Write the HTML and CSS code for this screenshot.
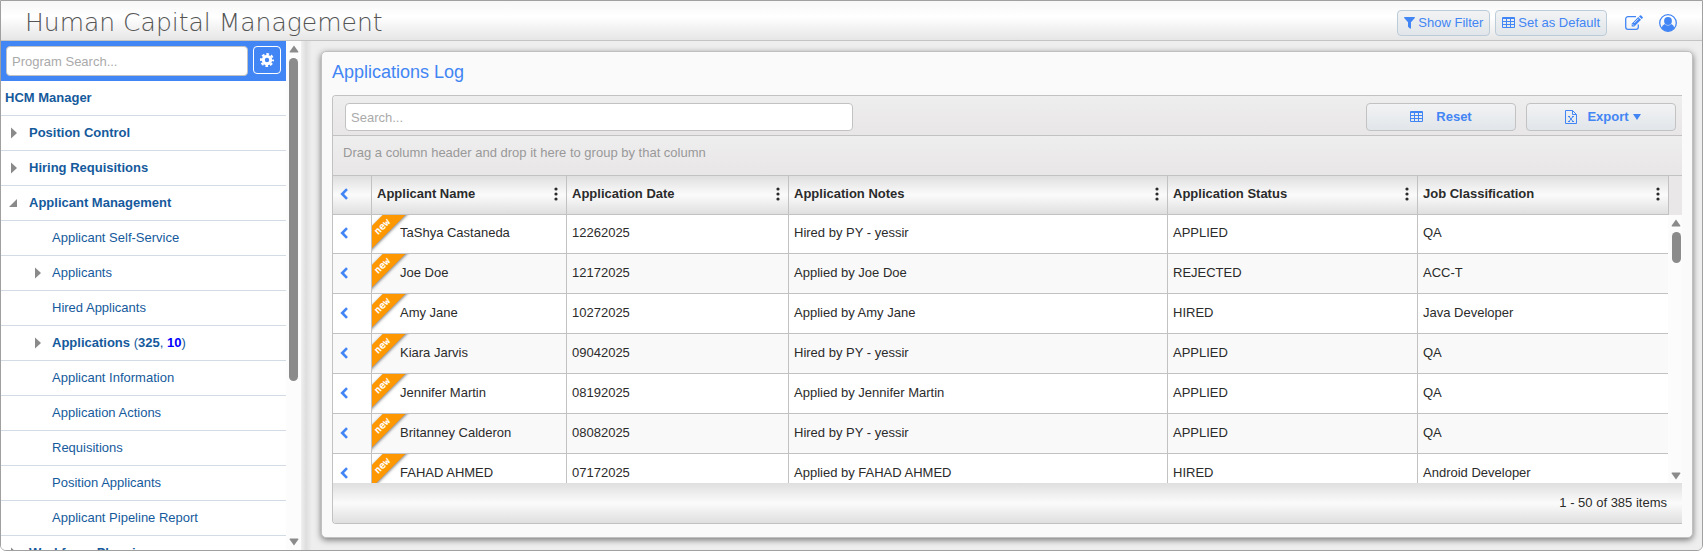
FILE: index.html
```html
<!DOCTYPE html>
<html lang="en">
<head>
<meta charset="utf-8">
<title>Human Capital Management</title>
<link rel="stylesheet" href="styles.css">
</head>
<body>
<svg class="defs" aria-hidden="true">
  <symbol id="i-table" viewBox="0 0 13 12"><path fill="currentColor" fill-rule="evenodd" d="M1 0h11a1 1 0 0 1 1 1v9a1 1 0 0 1-1 1H1a1 1 0 0 1-1-1V1a1 1 0 0 1 1-1zM1 2v2h3V2zM5 2v2h3V2zM9 2v2h3V2zM1 5v2h3V5zM5 5v2h3V5zM9 5v2h3V5zM1 8v2h3V8zM5 8v2h3V8zM9 8v2h3V8z"/></symbol>
  <symbol id="i-chevron" viewBox="0 0 8 12"><path d="M7 1.2 2.2 6 7 10.8" fill="none" stroke="currentColor" stroke-width="2.6"/></symbol>
  <symbol id="i-dots" viewBox="0 0 4 14"><circle cx="2" cy="2" r="1.6"/><circle cx="2" cy="7" r="1.6"/><circle cx="2" cy="12" r="1.6"/></symbol>
  <symbol id="i-right" viewBox="0 0 6 12"><path d="M0 0.5 6 6 0 11.5z"/></symbol>
  <symbol id="i-open" viewBox="0 0 8 8"><path d="M8 0v8H0z"/></symbol>
  <symbol id="i-up" viewBox="0 0 10 8"><path d="M5 0.5 9.3 6.5q.4 1-.6 1H1.3q-1 0-.6-1z"/></symbol>
  <symbol id="i-down" viewBox="0 0 10 8"><path d="M5 7.5.7 1.5q-.4-1 .6-1h7.4q1 0 .6 1z"/></symbol>
</svg>
<div class="app">
  <header class="topbar">
    <h1 class="brand">Human Capital Management</h1>
    <div class="actions">
      <button class="btn" type="button"><svg width="11" height="12" viewBox="0 0 11 12"><path fill="currentColor" d="M.6 0h9.8q.8.3.4 1L7 5.2V11q-.2 1-1 .5L4.200 10q-.2-.2-.2-.5V5.200L.2 1Q-.2.3.6 0z"/></svg>Show Filter</button>
      <button class="btn" type="button"><svg width="13" height="12"><use href="#i-table"/></svg>Set as Default</button>
      <button class="icon-btn edit" type="button" aria-label="Edit"><svg width="18" height="16" viewBox="0 0 18 16"><path fill="none" stroke="currentColor" stroke-width="1.300" d="M11 1.700H3A2.300 2.300 0 0 0 .7 4v8A2.300 2.300 0 0 0 3 14.300h8A2.300 2.300 0 0 0 13.300 12V9.500"/><path fill="currentColor" d="m13.300 2.100 2.700 2.700-6.600 6.600H6.700V8.700zM14 1.400l.9-.9q.7-.6 1.300 0l1.400 1.400q.6.600 0 1.300l-.9.9z"/><path stroke="#fff" stroke-width=".8" d="m9.200 8 4.300-4.300M7.500 9.200l1.400 1.400"/></svg></button>
      <button class="icon-btn" type="button" aria-label="Account"><svg width="18" height="18" viewBox="0 0 18 18"><circle cx="9" cy="9" r="8.300" fill="none" stroke="currentColor" stroke-width="1.300"/><circle cx="9" cy="7" r="3.900" fill="currentColor"/><path fill="currentColor" d="M2.600 14q.5-3.300 3.200-4.100Q9 13 12.200 9.900q2.700.8 3.200 4.100Q13 17.200 9 17.200T2.600 14z"/></svg></button>
    </div>
  </header>
  <div class="workspace">
    <aside class="sidebar">
      <div class="nav-pane">
        <div class="nav-search">
          <input type="text" placeholder="Program Search..." aria-label="Program Search">
          <button type="button" aria-label="Settings"><svg width="14" height="14" viewBox="0 0 14 14"><g fill="none" stroke="#fff"><circle cx="7" cy="7" r="3.700" stroke-width="3"/><circle cx="7" cy="7" r="6" stroke-width="2" stroke-dasharray="2.712 2" stroke-dashoffset="1.356"/></g></svg></button>
        </div>
        <ul class="nav">
          <li class="root"><a href="#">HCM Manager</a></li>
          <li class="group"><svg class="tri" width="6" height="12"><use href="#i-right"/></svg><a href="#">Position Control</a></li>
          <li class="group"><svg class="tri" width="6" height="12"><use href="#i-right"/></svg><a href="#">Hiring Requisitions</a></li>
          <li class="group"><svg class="tri" width="8" height="8"><use href="#i-open"/></svg><a href="#">Applicant Management</a></li>
          <li class="leaf"><a href="#">Applicant Self-Service</a></li>
          <li class="leaf"><svg class="tri" width="6" height="12"><use href="#i-right"/></svg><a href="#">Applicants</a></li>
          <li class="leaf"><a href="#">Hired Applicants</a></li>
          <li class="leaf"><svg class="tri" width="6" height="12"><use href="#i-right"/></svg><a href="#"><b>Applications</b> (<b>325</b>, <b class="count">10</b>)</a></li>
          <li class="leaf"><a href="#">Applicant Information</a></li>
          <li class="leaf"><a href="#">Application Actions</a></li>
          <li class="leaf"><a href="#">Requisitions</a></li>
          <li class="leaf"><a href="#">Position Applicants</a></li>
          <li class="leaf"><a href="#">Applicant Pipeline Report</a></li>
          <li class="group"><svg class="tri" width="6" height="12"><use href="#i-right"/></svg><a href="#">Workforce Planning</a></li>
        </ul>
      </div>
      <div class="scroll"><svg width="10" height="8"><use href="#i-up"/></svg><div class="track"><div class="thumb nav-thumb"></div></div><svg width="10" height="8"><use href="#i-down"/></svg></div>
    </aside>
    <main class="content">
      <section class="panel">
        <h2>Applications Log</h2>
        <div class="grid">
          <div class="toolbar">
            <input type="text" placeholder="Search..." aria-label="Search">
            <div class="tools">
              <button class="btn wide" type="button"><svg width="13" height="12"><use href="#i-table"/></svg>Reset</button>
              <button class="btn wide export" type="button"><svg width="12" height="14" viewBox="0 0 12 14"><path fill="none" stroke="currentColor" d="M.5.5h7l4 4v9H.5zM7.500.5v4h4M4 6.500l4 5M8 6.500l-4 5M3 6.500h2M7 6.500h2M3 11.500h2M7 11.500h2"/></svg><span>Export <svg width="8" height="6" viewBox="0 0 8 6"><path fill="currentColor" d="M0 0h8L4 6z"/></svg></span></button>
            </div>
          </div>
          <div class="grouping">Drag a column header and drop it here to group by that column</div>
          <div class="head">
            <table>
              <colgroup><col class="c0"><col class="c1"><col class="c2"><col class="c3"><col class="c4"><col class="c5"></colgroup>
              <thead><tr>
                <th><svg class="chev" width="8" height="12"><use href="#i-chevron"/></svg></th>
                <th><div class="th">Applicant Name<svg width="4" height="14"><use href="#i-dots"/></svg></div></th>
                <th><div class="th">Application Date<svg width="4" height="14"><use href="#i-dots"/></svg></div></th>
                <th><div class="th">Application Notes<svg width="4" height="14"><use href="#i-dots"/></svg></div></th>
                <th><div class="th">Application Status<svg width="4" height="14"><use href="#i-dots"/></svg></div></th>
                <th><div class="th">Job Classification<svg width="4" height="14"><use href="#i-dots"/></svg></div></th>
              </tr></thead>
            </table>
          </div>
          <div class="rows">
            <div class="viewport">
              <table>
                <colgroup><col class="c0"><col class="c1"><col class="c2"><col class="c3"><col class="c4"><col class="c5"></colgroup>
                <tbody>
                <tr><td><svg class="chev" width="8" height="12"><use href="#i-chevron"/></svg></td><td class="name"><div class="ribbon"><span>new</span></div>TaShya Castaneda</td><td>12262025</td><td>Hired by PY - yessir</td><td>APPLIED</td><td>QA</td></tr>
                <tr><td><svg class="chev" width="8" height="12"><use href="#i-chevron"/></svg></td><td class="name"><div class="ribbon"><span>new</span></div>Joe Doe</td><td>12172025</td><td>Applied by Joe Doe</td><td>REJECTED</td><td>ACC-T</td></tr>
                <tr><td><svg class="chev" width="8" height="12"><use href="#i-chevron"/></svg></td><td class="name"><div class="ribbon"><span>new</span></div>Amy Jane</td><td>10272025</td><td>Applied by Amy Jane</td><td>HIRED</td><td>Java Developer</td></tr>
                <tr><td><svg class="chev" width="8" height="12"><use href="#i-chevron"/></svg></td><td class="name"><div class="ribbon"><span>new</span></div>Kiara Jarvis</td><td>09042025</td><td>Hired by PY - yessir</td><td>APPLIED</td><td>QA</td></tr>
                <tr><td><svg class="chev" width="8" height="12"><use href="#i-chevron"/></svg></td><td class="name"><div class="ribbon"><span>new</span></div>Jennifer Martin</td><td>08192025</td><td>Applied by Jennifer Martin</td><td>APPLIED</td><td>QA</td></tr>
                <tr><td><svg class="chev" width="8" height="12"><use href="#i-chevron"/></svg></td><td class="name"><div class="ribbon"><span>new</span></div>Britanney Calderon</td><td>08082025</td><td>Hired by PY - yessir</td><td>APPLIED</td><td>QA</td></tr>
                <tr><td><svg class="chev" width="8" height="12"><use href="#i-chevron"/></svg></td><td class="name"><div class="ribbon"><span>new</span></div>FAHAD AHMED</td><td>07172025</td><td>Applied by FAHAD AHMED</td><td>HIRED</td><td>Android Developer</td></tr>
                </tbody>
              </table>
            </div>
            <div class="scroll grid-scroll"><svg width="10" height="8"><use href="#i-up"/></svg><div class="track"><div class="thumb row-thumb"></div></div><svg width="10" height="8"><use href="#i-down"/></svg></div>
          </div>
          <footer class="pager">1 - 50 of 385 items</footer>
        </div>
      </section>
    </main>
  </div>
</div>
</body>
</html>
```
FILE: styles.css
```css
* { box-sizing: border-box; }
body { margin: 0; background: #fff; color: #2b2b2b; font: 13px/16px "Liberation Sans", Arial, sans-serif; }
button, input { font: inherit; }
button { cursor: pointer; }
svg { flex: none; display: block; }
.defs { position: absolute; width: 0; height: 0; }
.app { display: flex; flex-direction: column; height: 100vh; border: 1px solid #a0a0a0; border-radius: 0 0 6px 6px; overflow: hidden; background: #eee; }

.topbar { flex: none; display: flex; align-items: center; justify-content: space-between; height: 40px; padding: 4px 25px 0 24px; border-bottom: 1px solid #c4c4c4; background: linear-gradient(#f7f7f7, #fff 40%, #e6e6e6); }
.brand { margin: 0; color: #555; font: 200 25px/32px "DejaVu Sans Light", "DejaVu Sans", sans-serif; }
.actions { display: flex; align-items: center; gap: 5px; }
.btn { display: flex; align-items: center; justify-content: center; gap: 3px; height: 26px; padding: 0 6px; border: 1px solid #bccbd8; border-radius: 4px; background: linear-gradient(#f2f3f4, #e1e6ea); color: #4285f4; }
.icon-btn { padding: 0; border: 0; background: none; color: #4285f4; margin-left: 11px; }
.edit { margin-left: 13px; }

.workspace { flex: 1; min-height: 0; display: flex; }
.sidebar { flex: none; width: 300px; display: flex; background: #fcfcfc; }
.nav-pane { flex: 1; overflow: hidden; background: #fff; }
.nav-search { display: flex; gap: 5px; height: 40px; padding: 5px; background: #4285f4; }
.nav-search input { flex: 1; min-width: 0; height: 30px; }
.nav-search button { display: grid; place-items: center; width: 28px; height: 28px; padding: 0; border: 1px solid #fff; border-radius: 4px; background: #4285f4; }
input { padding: 0 5px; border: 1px solid #c2c2c2; border-radius: 4px; background: #fff; }
input::placeholder { color: #aaa; }
.nav { margin: 0; padding: 0; list-style: none; }
.nav li { display: flex; align-items: center; height: 35px; border-bottom: 1px solid #d3dce4; }
.nav a { color: #155a9c; text-decoration: none; white-space: nowrap; }
.root { padding-left: 4px; }
.root a, .group a { font-weight: bold; }
.group { position: relative; padding-left: 28px; }
.leaf { position: relative; padding-left: 51px; }
.tri { position: absolute; left: 10px; fill: #8a8a8a; }
.group .tri[width="8"] { left: 8px; }
.leaf .tri { left: 34px; }
.count { color: #00f; }

.scroll { flex: none; width: 15px; display: flex; flex-direction: column; align-items: center; gap: 5px; padding: 4px 0; fill: #8b8b8b; background: #fcfcfc; }
.track { flex: 1; width: 9px; }
.thumb { border-radius: 5px; background: #8b8b8b; }
.nav-thumb { height: 68%; }
.row-thumb { height: 31px; }

.content { flex: 1; min-width: 0; display: flex; padding: 10px 9px 12px 20px; background: linear-gradient(90deg, #f0f0f0, #dedede 5px, #eee 11px, #eee); }
.panel { flex: 1; min-width: 0; display: flex; flex-direction: column; padding: 10px 10px 13px; border: 1px solid #c0c0c0; border-radius: 5px; background: #fafafa; box-shadow: 0 2px 6px rgba(0, 0, 0, .5); }
.panel h2 { margin: 0 0 13px; color: #4285f4; font-size: 18px; font-weight: normal; line-height: 20px; }
.grid { flex: 1; min-height: 0; display: flex; flex-direction: column; border: 1px solid #c2c2c2; border-right: 0; border-radius: 4px 0 0 4px; overflow: hidden; }
.toolbar { flex: none; display: flex; align-items: center; justify-content: space-between; height: 40px; padding: 3px 6px 0 12px; border-bottom: 1px solid #c2c2c2; background: linear-gradient(#efeeef, #e8e6e7); }
.toolbar input { flex: 0 1 508px; min-width: 0; height: 28px; }
.tools { display: flex; gap: 10px; }
.wide { width: 150px; height: 28px; gap: 13px; border-color: #c2c2c2; font-weight: bold; }
.export { gap: 10px; padding-left: 10px; }
.export span { display: flex; align-items: center; gap: 4px; }
.grouping { flex: none; height: 40px; padding: 9px 10px; border-bottom: 1px solid #c2c2c2; color: #999; background: linear-gradient(#efeeef, #e8e6e7); }
table { width: 100%; table-layout: fixed; border-collapse: separate; border-spacing: 0; }
.c0 { width: 39px; } .c1 { width: 195px; } .c2 { width: 222px; } .c3 { width: 379px; } .c4 { width: 250px; } .c5 { width: 251px; }
.head { flex: none; padding-right: 14px; background: #e9e7e8; }
th, td { padding: 0 5px 2px; border-right: 1px solid #c2c2c2; border-bottom: 1px solid #c2c2c2; text-align: left; white-space: nowrap; }
th { height: 39px; background: linear-gradient(#dfdfdf, #fbfbfb 50%, #dfdfdf); }
.th { display: flex; align-items: center; justify-content: space-between; padding-right: 3px; fill: #2b2b2b; }
td { height: 40px; background: #fff; }
tr:first-child td { height: 39px; }
tr:nth-child(even) td { background: #f9f9f9; }
.chev { color: #4285f4; margin-left: 2px; }
.rows { flex: 1; min-height: 0; display: flex; background: #fff; }
.viewport { flex: 1; min-width: 0; overflow: hidden; }
.name { position: relative; padding-left: 28px; }
.ribbon { position: absolute; left: 0; top: 0; width: 38px; height: 38px; overflow: hidden; }
.ribbon span { position: absolute; left: -19px; top: 3px; width: 60px; height: 16px; padding-right: 2px; background: #ff9800; color: #fff; font: bold 10px/15px "DejaVu Sans Mono", monospace; text-align: center; transform: rotate(-45deg); box-shadow: 0 1px 3px rgba(0, 0, 0, .5); }
.grid-scroll { width: 14px; padding-left: 2px; padding-bottom: 3px; }
.pager { flex: none; height: 40px; padding: 12px 15px; text-align: right; background: linear-gradient(#dfdfdf, #fbfbfb 50%, #dfdfdf); }
```
